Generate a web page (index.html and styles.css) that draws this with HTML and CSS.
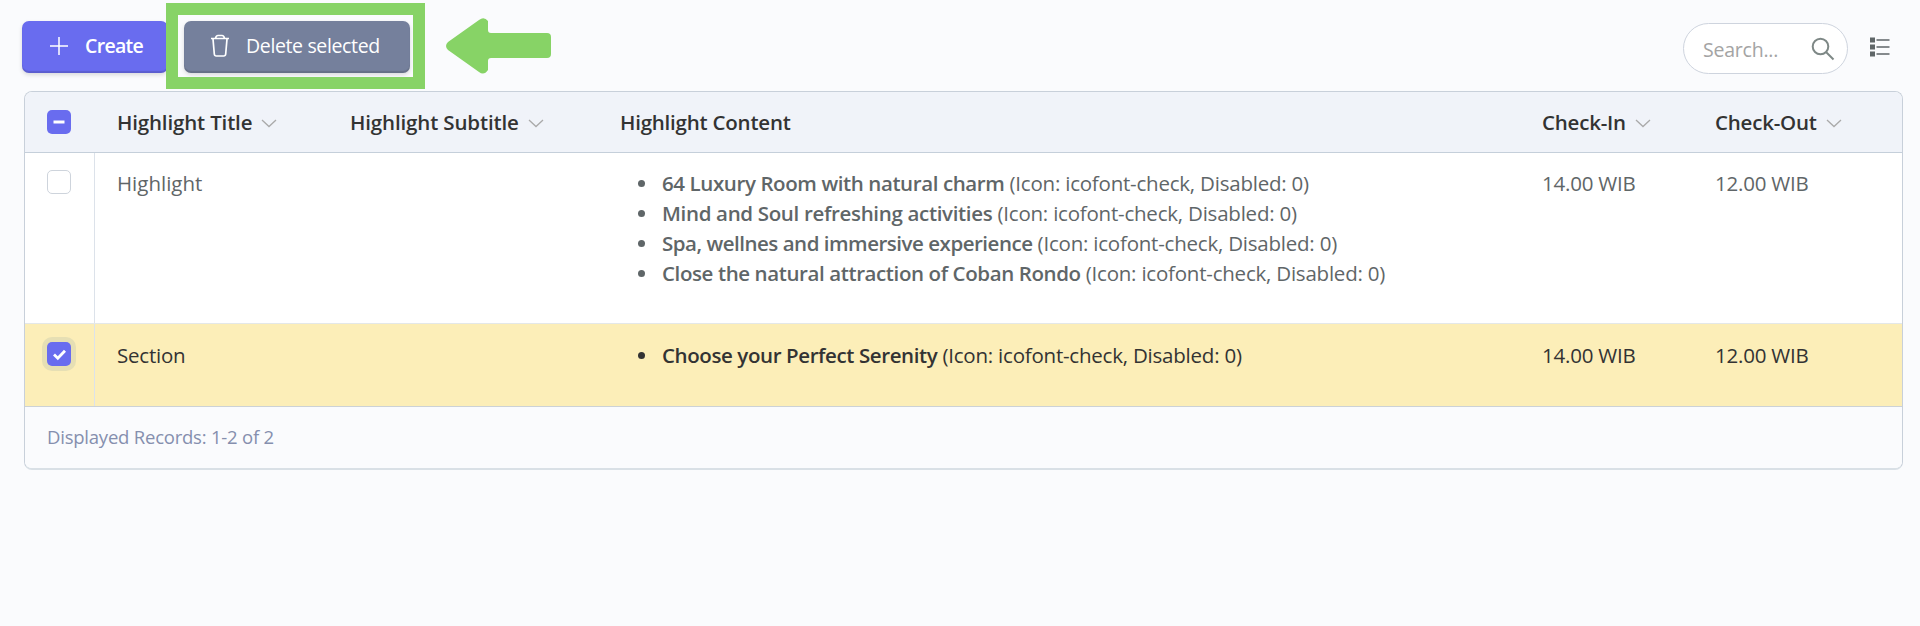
FILE: index.html
```
<!DOCTYPE html>
<html lang="en">
<head>
<meta charset="utf-8">
<title>Highlights</title>
<link rel="stylesheet" href="styles.css">
</head>
<body>
<header class="toolbar">
  <div class="actions">
    <button class="btn btn-create"><svg class="plus" viewBox="0 0 20 20" width="20" height="20"><path d="M10 1v18M1 10h18"/></svg><span>Create</span></button>
    <button class="btn btn-delete"><svg class="trash" viewBox="0 0 20 24" width="20" height="24"><path d="M1 4.500h18M5.500 4.500Q6 1.500 8 1.500h4q2 0 2.500 3M3 5l1.300 15q.2 2 2 2h7.400q1.800 0 2-2L17 5"/></svg><span>Delete selected</span></button>
  </div>
  <div class="tools">
    <div class="search"><span>Search...</span><svg viewBox="0 0 24 24" width="24" height="24"><circle cx="9.500" cy="9.500" r="7.800"/><path d="M15 15l7.500 7.500"/></svg></div>
    <svg class="list" viewBox="0 0 20 20" width="20" height="20"><path class="dots" d="M0 .5h5v5H0zM0 7.500h5v5H0zM0 14.500h5v5H0z"/><path class="lines" d="M6.500 3h13M6.500 10h13M6.500 17h13"/></svg>
  </div>
</header>
<main class="grid">
  <div class="row head">
    <div class="check"><span class="box on"><svg viewBox="0 0 24 24"><path d="M6.500 12h11"/></svg></span></div>
    <div class="cell title"><span>Highlight Title</span><svg class="chev" viewBox="0 0 16 9"><path d="M1 1l7 6.500L15 1"/></svg></div>
    <div class="cell subtitle"><span>Highlight Subtitle</span><svg class="chev" viewBox="0 0 16 9"><path d="M1 1l7 6.500L15 1"/></svg></div>
    <div class="cell"><span>Highlight Content</span></div>
    <div class="cell"><span>Check-In</span><svg class="chev" viewBox="0 0 16 9"><path d="M1 1l7 6.500L15 1"/></svg></div>
    <div class="cell"><span>Check-Out</span><svg class="chev" viewBox="0 0 16 9"><path d="M1 1l7 6.500L15 1"/></svg></div>
  </div>
  <div class="row first">
    <div class="check"><span class="box"></span></div>
    <div class="cell wide">Highlight</div>
    <div class="cell"></div>
    <ul class="cell">
      <li><strong>64 Luxury Room with natural charm</strong> (Icon: icofont-check, Disabled: 0)</li>
      <li><strong class="loose">Mind and Soul refreshing activities</strong> (Icon: icofont-check, Disabled: 0)</li>
      <li><strong class="tight">Spa, wellnes and immersive experience</strong> (Icon: icofont-check, Disabled: 0)</li>
      <li><strong>Close the natural attraction of Coban Rondo</strong> (Icon: icofont-check, Disabled: 0)</li>
    </ul>
    <div class="cell">14.00 WIB</div>
    <div class="cell">12.00 WIB</div>
  </div>
  <div class="row selected">
    <div class="check"><span class="box on focus"><svg viewBox="0 0 24 24"><path class="tick" d="M7 12.500l3.800 3.700 7.200-7.500"/></svg></span></div>
    <div class="cell">Section</div>
    <div class="cell"></div>
    <ul class="cell">
      <li><strong>Choose your Perfect Serenity</strong> (Icon: icofont-check, Disabled: 0)</li>
    </ul>
    <div class="cell">14.00 WIB</div>
    <div class="cell">12.00 WIB</div>
  </div>
  <footer class="foot">Displayed Records: 1-2 of 2</footer>
</main>
<div class="marker"></div>
<svg class="arrow" viewBox="0 0 106 56" width="106" height="56"><path d="M2 24L33 2Q38-2 42 3V12Q42 15 45 15H101Q105 15 105 19V36Q105 40 101 40H45Q42 40 42 43V52Q38 58 33 54L2 32Q-2 28 2 24Z"/></svg>
</body>
</html>
```
FILE: styles.css
```
* { box-sizing: border-box; }
body { margin: 0; height: 626px; overflow: hidden; background: #fafbfd; font: 20.500px/30px "Open Sans", "Noto Sans", sans-serif; color: #5f6668; letter-spacing: -.22px; }
svg { fill: none; stroke: currentColor; flex: none; }
.toolbar { height: 91px; display: flex; justify-content: space-between; padding: 21px 26px 0 22px; }
.actions { display: flex; gap: 16px; }
.btn { height: 52px; border: 0; border-radius: 7px; color: #fff; font: inherit; font-size: 19.500px; display: flex; align-items: center; padding: 0 0 2px 27px; box-shadow: inset 0 -2px 1px #0002, 0 2px 4px #0002; }
.btn-create { width: 146px; background: #696cef; font-weight: 600; gap: 16px; letter-spacing: -.7px; }
.btn-delete { width: 226px; background: #75809c; gap: 16px; letter-spacing: -.36px; padding-left: 26px; }
.plus { stroke-width: 1.500; }
.trash { stroke-width: 1.700; }
.tools { display: flex; gap: 22px; align-items: flex-start; padding-top: 2px; }
.search { width: 165px; height: 51px; border: 1px solid #ced4de; border-radius: 26px; background: #fff; color: #a4a4a4; font-size: 19.500px; display: flex; align-items: center; justify-content: space-between; padding: 2px 12px 0 19px; }
.search svg { color: #7e8886; stroke-width: 2; margin-bottom: 2px; }
.list { margin: 14px 4px 0 0; color: #5f6668; stroke-width: 1.500; }
.dots { fill: currentColor; stroke: none; }
.grid { margin: 0 17px 0 24px; border: 1px solid #c8d0da; border-bottom: 2px solid #d9e0e6; border-radius: 8px; overflow: hidden; height: 379px; background: #fff; }
.row { display: grid; grid-template-columns: 70px 233px 270px 922px 173px 1fr; }
.head { height: 61px; background: #f0f3f9; color: #333; font-weight: 600; border-bottom: 1px solid #c5cfda; }
.cell { padding: 15px 0 0 22px; margin: 0; white-space: nowrap; }
.wide { letter-spacing: 0; }
.title { letter-spacing: -.16px; }
.subtitle { letter-spacing: -.14px; }
.chev { width: 16px; height: 9px; margin-left: 9px; color: #aaa; stroke-width: 1.300; vertical-align: 2px; }
.check { padding: 17px 0 0 22px; border-right: 1px solid #dce2ea; }
.head .check { border: 0; padding-top: 18px; }
.box { display: block; width: 24px; height: 24px; border-radius: 5px; border: 1px solid #ced4dc; background: #fff; }
.on { border: 0; background: #696cef; color: #fff; }
.on svg { display: block; stroke-width: 2.800; }
.focus { box-shadow: 0 0 0 5px #e6dfb4; }
.first { height: 171px; border-bottom: 1px solid #e4e8e8; }
ul.cell { padding-left: 64px; list-style: none; }
li::before { content: ""; display: inline-block; width: 7px; height: 7px; margin: 0 17px 0 -24px; border-radius: 50%; background: currentColor; vertical-align: 4px; }
strong { font-weight: 600; letter-spacing: -.4px; }
.loose { letter-spacing: -.33px; }
.tight { letter-spacing: -.48px; }
.selected { height: 83px; background: #fceeb8; color: #333; border-bottom: 1px solid #ccd2d6; }
.selected .cell { padding-top: 16px; }
.selected .check { padding-top: 18px; }
.foot { height: 62px; background: #fafbfd; color: #858fae; font-size: 18.500px; padding: 15px 22px; }
.marker { position: absolute; left: 166px; top: 3px; width: 259px; height: 86px; border: 12px solid #87d366; }
.arrow { position: absolute; left: 446px; top: 18px; fill: #87d366; stroke: none; }
```
